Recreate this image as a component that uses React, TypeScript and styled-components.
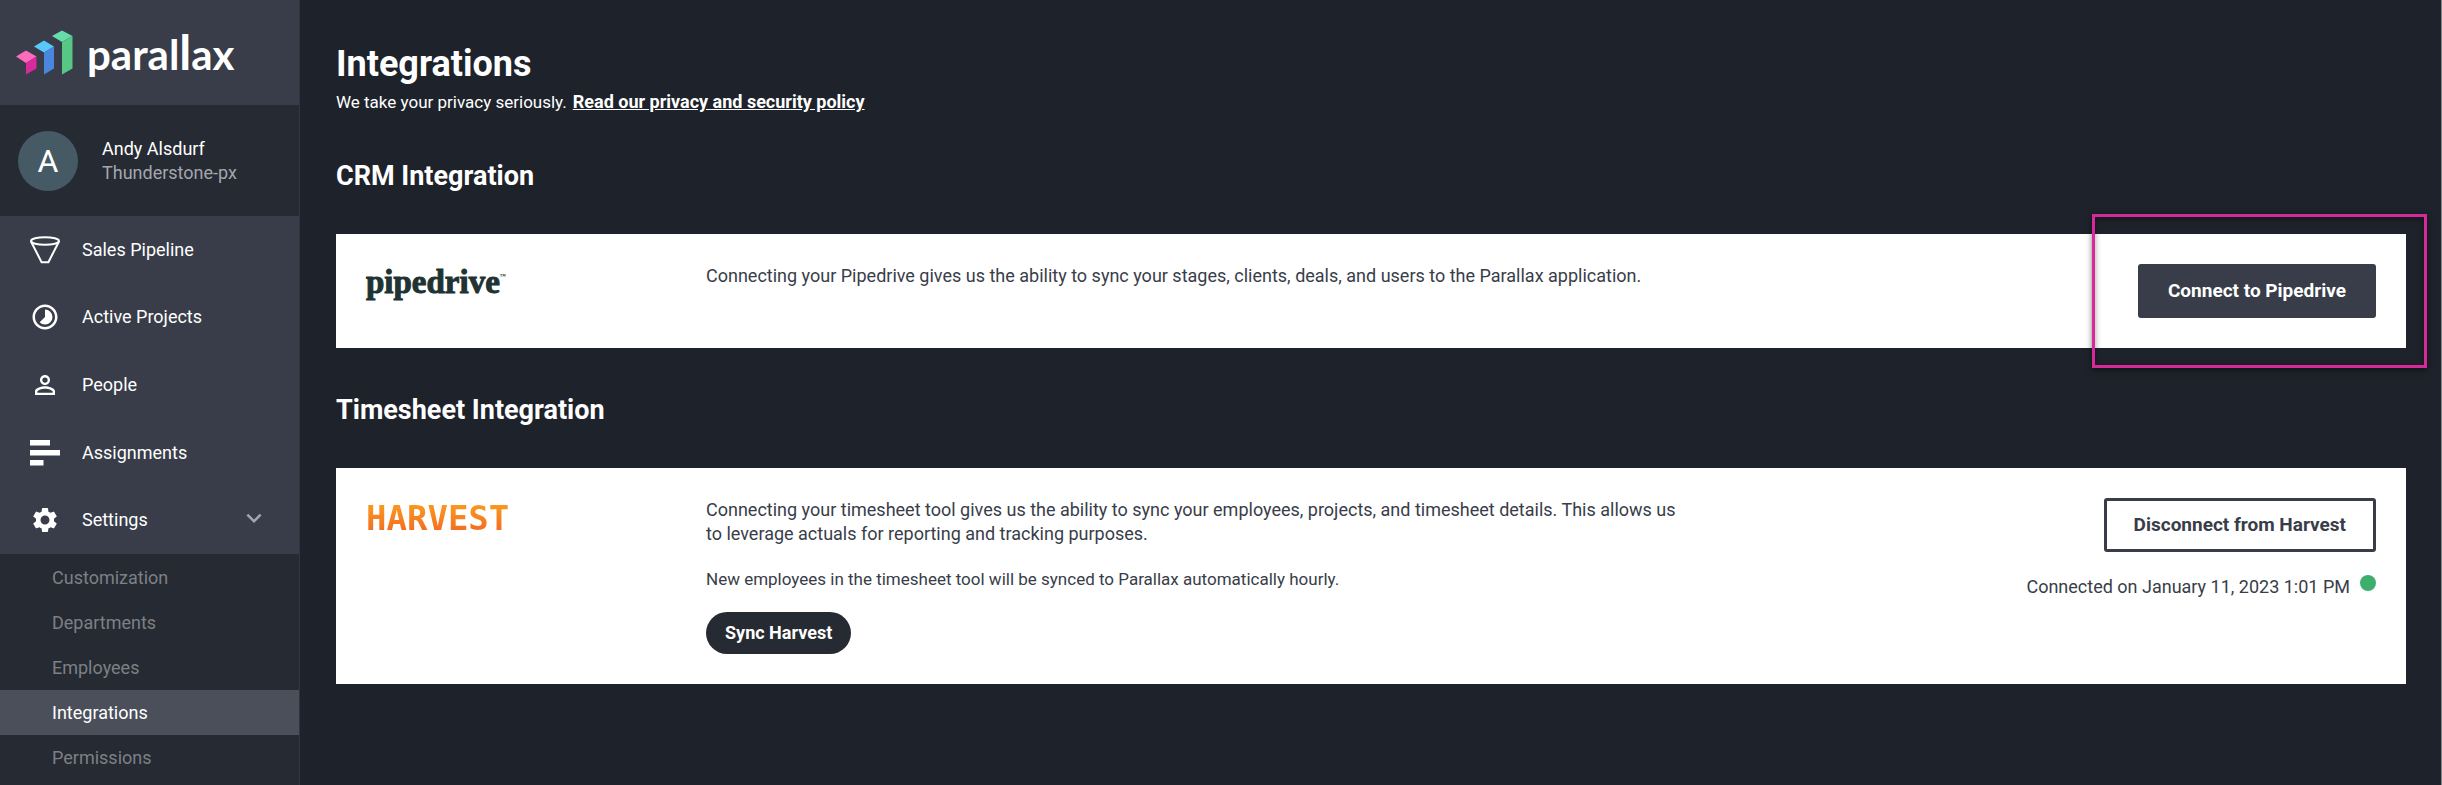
import React from "react";
import styled, { createGlobalStyle } from "styled-components";
import {
  MdExpandMore,
  MdPersonOutline,
  MdSettings,
  MdTimelapse,
} from "react-icons/md";

const GlobalStyle = createGlobalStyle`
  *, *::before, *::after { box-sizing: border-box; }
  body {
    margin: 0;
    background: #1e222a;
    color: #fff;
    font-family: Roboto, "Liberation Sans", sans-serif;
    font-size: 18px;
    line-height: 24px;
  }
  h1, h2, p, ul { margin: 0; padding: 0; }
  ul { list-style: none; }
  button { font: inherit; cursor: pointer; }
`;

const Shell = styled.div`
  display: flex;
  min-height: 100vh;
`;

const Sidebar = styled.aside`
  flex: 0 0 300px;
  background: #262a33;
  border-right: 1px solid #30353f;
`;

const Brand = styled.a`
  display: flex;
  align-items: center;
  gap: 14px;
  height: 105px;
  padding-left: 16px;
  background: #383d49;
  color: #fff;
  text-decoration: none;
`;

const Wordmark = styled.span`
  font-family: Lato, sans-serif;
  font-size: 42px;
  font-weight: 700;
  line-height: 44px;
`;

const TallLetter = styled.span`
  font-size: 48px;
  line-height: 44px;
`;

const Profile = styled.div`
  display: flex;
  align-items: center;
  gap: 24px;
  height: 111px;
  padding-left: 18px;
`;

const Avatar = styled.span`
  display: grid;
  place-items: center;
  width: 60px;
  height: 60px;
  border-radius: 50%;
  background: #455a64;
  font-size: 32px;
`;

const Company = styled.p`
  color: #a3a6ad;
`;

const Nav = styled.ul`
  display: grid;
  grid-auto-rows: 1fr;
  height: 338px;
  margin-bottom: 1px;
  background: #383d49;
`;

const NavLink = styled.a`
  display: flex;
  align-items: center;
  height: 100%;
  padding: 0 30px;
  gap: 22px;
  color: #fff;
  text-decoration: none;
`;

const Chevron = styled(MdExpandMore)`
  margin-left: auto;
  margin-bottom: 4px;
  color: #a3a6ad;
`;

const SubLink = styled.a<{ $active?: boolean }>`
  display: flex;
  align-items: center;
  height: 45px;
  padding-left: 52px;
  background: ${(p) => (p.$active ? "#4b4f5a" : "transparent")};
  color: ${(p) => (p.$active ? "#fff" : "#7d8085")};
  text-decoration: none;
`;

const Main = styled.main`
  flex: 1;
  min-width: 0;
  padding: 43px 35px 36px 36px;
  border-right: 1px solid #85878b;
`;

const Title = styled.h1`
  font-size: 36px;
  line-height: 42px;
`;

const Intro = styled.p`
  display: flex;
  gap: 6px;
  margin-top: 5px;
  font-size: 17px;
`;

const PolicyLink = styled.a`
  color: #fff;
  font-size: 18px;
  font-weight: 700;
`;

const Section = styled.section`
  margin-top: 46px;
`;

const SectionTitle = styled.h2`
  font-size: 27px;
  line-height: 32px;
`;

const Card = styled.div`
  position: relative;
  display: grid;
  grid-template-columns: 340px minmax(0, 980px) 1fr;
  margin-top: 42px;
  padding: 30px;
  background: #fff;
  color: #383d49;
`;

const Details = styled.div`
  display: flex;
  flex-direction: column;
  align-items: flex-start;
`;

const Note = styled.p`
  margin-top: 21px;
  font-size: 17px;
`;

const Actions = styled.div`
  display: flex;
  flex-direction: column;
  align-items: flex-end;
`;

const Button = styled.button<{ $outlined?: boolean }>`
  height: 54px;
  padding: 0 27px;
  border: 3px solid #383d49;
  border-radius: 3px;
  background: ${(p) => (p.$outlined ? "#fff" : "#383d49")};
  color: ${(p) => (p.$outlined ? "#383d49" : "#fff")};
  font-size: 19px;
  font-weight: 700;
`;

const PillButton = styled.button`
  height: 42px;
  margin-top: 21px;
  padding: 0 19px;
  border: 0;
  border-radius: 21px;
  background: #262a33;
  color: #fff;
  font-weight: 700;
`;

const Status = styled.p`
  display: flex;
  gap: 10px;
  margin-top: 23px;
`;

const StatusDot = styled.span`
  width: 16px;
  height: 16px;
  border-radius: 50%;
  background: #3eae6f;
`;

const PipedriveLogo = styled.span`
  color: #203232;
  font-family: "Liberation Serif", serif;
  font-size: 33px;
  font-weight: 700;
  line-height: 36px;
  -webkit-text-stroke: 1px #203232;
`;

const Trademark = styled.span`
  font-size: 6px;
  line-height: 24px;
  vertical-align: top;
  -webkit-text-stroke: 0;
`;

const HarvestLogo = styled.span`
  justify-self: start;
  align-self: start;
  background: linear-gradient(#fa9a1f 15%, #f36c21 85%);
  background-clip: text;
  color: transparent;
  font-family: "DejaVu Sans Mono", monospace;
  font-size: 34px;
  font-weight: 700;
  line-height: 40px;
`;

const Highlight = styled.div`
  position: absolute;
  top: -20px;
  right: -21px;
  bottom: -20px;
  width: 335px;
  border: 3px solid #d6299a;
  box-shadow: 0 2px 6px rgba(0, 0, 0, 0.5), inset 0 2px 6px rgba(0, 0, 0, 0.4);
  pointer-events: none;
`;

const BrandMark = () => (
  <svg width="57" height="45" viewBox="0 0 57 45" aria-hidden="true">
    <path d="M0 26.5 10 20.5 20.5 26.5 10 33z" fill="#ff6cbc" />
    <path d="M10 33 20.5 26.5V38.5L10 44.5z" fill="#d9299b" />
    <path d="M18 16.5 28 10.5 38 16.5 28 22.5z" fill="#58c8fa" />
    <path d="M28 22.5 38 16.5V38.5L28 44.5z" fill="#4a86e0" />
    <path d="M36 6 46 .5 56.5 6 46 12z" fill="#66dcab" />
    <path d="M46 12 56.5 6V38.5L46 44.5z" fill="#57c785" />
  </svg>
);

const FunnelIcon = () => (
  <svg width="30" height="30" viewBox="0 0 30 30" fill="none" stroke="#fff" strokeWidth="2" aria-hidden="true">
    <ellipse cx="15" cy="6" rx="14" ry="3.8" />
    <path d="M1 6.5 11.6 27.2H18.4L29 6.5" />
  </svg>
);

const AssignmentsIcon = () => (
  <svg width="30" height="30" viewBox="0 0 30 30" fill="#fff" aria-hidden="true">
    <path d="M0 2h20v5.5H0zM0 12h30v5.500H0zM0 22h13.500v5.500H0z" />
  </svg>
);

const navItems = [
  { label: "Sales Pipeline", icon: <FunnelIcon /> },
  { label: "Active Projects", icon: <MdTimelapse size={30} /> },
  { label: "People", icon: <MdPersonOutline size={30} /> },
  { label: "Assignments", icon: <AssignmentsIcon /> },
  { label: "Settings", icon: <MdSettings size={30} />, expandable: true },
];

const settingsItems = [
  "Customization",
  "Departments",
  "Employees",
  "Integrations",
  "Permissions",
];

export default function App() {
  return (
    <>
      <GlobalStyle />
      <Shell>
        <Sidebar>
          <Brand href="#">
            <BrandMark />
            <Wordmark>
              paral<TallLetter>l</TallLetter>ax
            </Wordmark>
          </Brand>
          <Profile>
            <Avatar>A</Avatar>
            <div>
              <p>Andy Alsdurf</p>
              <Company>Thunderstone-px</Company>
            </div>
          </Profile>
          <nav>
            <Nav>
              {navItems.map((item) => (
                <li key={item.label}>
                  <NavLink href="#">
                    {item.icon}
                    {item.label}
                    {item.expandable && <Chevron size={30} />}
                  </NavLink>
                </li>
              ))}
            </Nav>
            <ul>
              {settingsItems.map((label) => (
                <li key={label}>
                  <SubLink href="#" $active={label === "Integrations"}>
                    {label}
                  </SubLink>
                </li>
              ))}
            </ul>
          </nav>
        </Sidebar>
        <Main>
          <Title>Integrations</Title>
          <Intro>
            We take your privacy seriously.
            <PolicyLink href="#">Read our privacy and security policy</PolicyLink>
          </Intro>
          <Section>
            <SectionTitle>CRM Integration</SectionTitle>
            <Card>
              <PipedriveLogo>
                pipedrive<Trademark>™</Trademark>
              </PipedriveLogo>
              <Details>
                <p>
                  Connecting your Pipedrive gives us the ability to sync your
                  stages, clients, deals, and users to the Parallax application.
                </p>
              </Details>
              <Actions>
                <Button type="button">Connect to Pipedrive</Button>
              </Actions>
              <Highlight />
            </Card>
          </Section>
          <Section>
            <SectionTitle>Timesheet Integration</SectionTitle>
            <Card>
              <HarvestLogo>HARVEST</HarvestLogo>
              <Details>
                <p>
                  Connecting your timesheet tool gives us the ability to sync
                  your employees, projects, and timesheet details. This allows
                  us to leverage actuals for reporting and tracking purposes.
                </p>
                <Note>
                  New employees in the timesheet tool will be synced to Parallax
                  automatically hourly.
                </Note>
                <PillButton type="button">Sync Harvest</PillButton>
              </Details>
              <Actions>
                <Button type="button" $outlined>
                  Disconnect from Harvest
                </Button>
                <Status>
                  Connected on January 11, 2023 1:01 PM
                  <StatusDot />
                </Status>
              </Actions>
            </Card>
          </Section>
        </Main>
      </Shell>
    </>
  );
}
